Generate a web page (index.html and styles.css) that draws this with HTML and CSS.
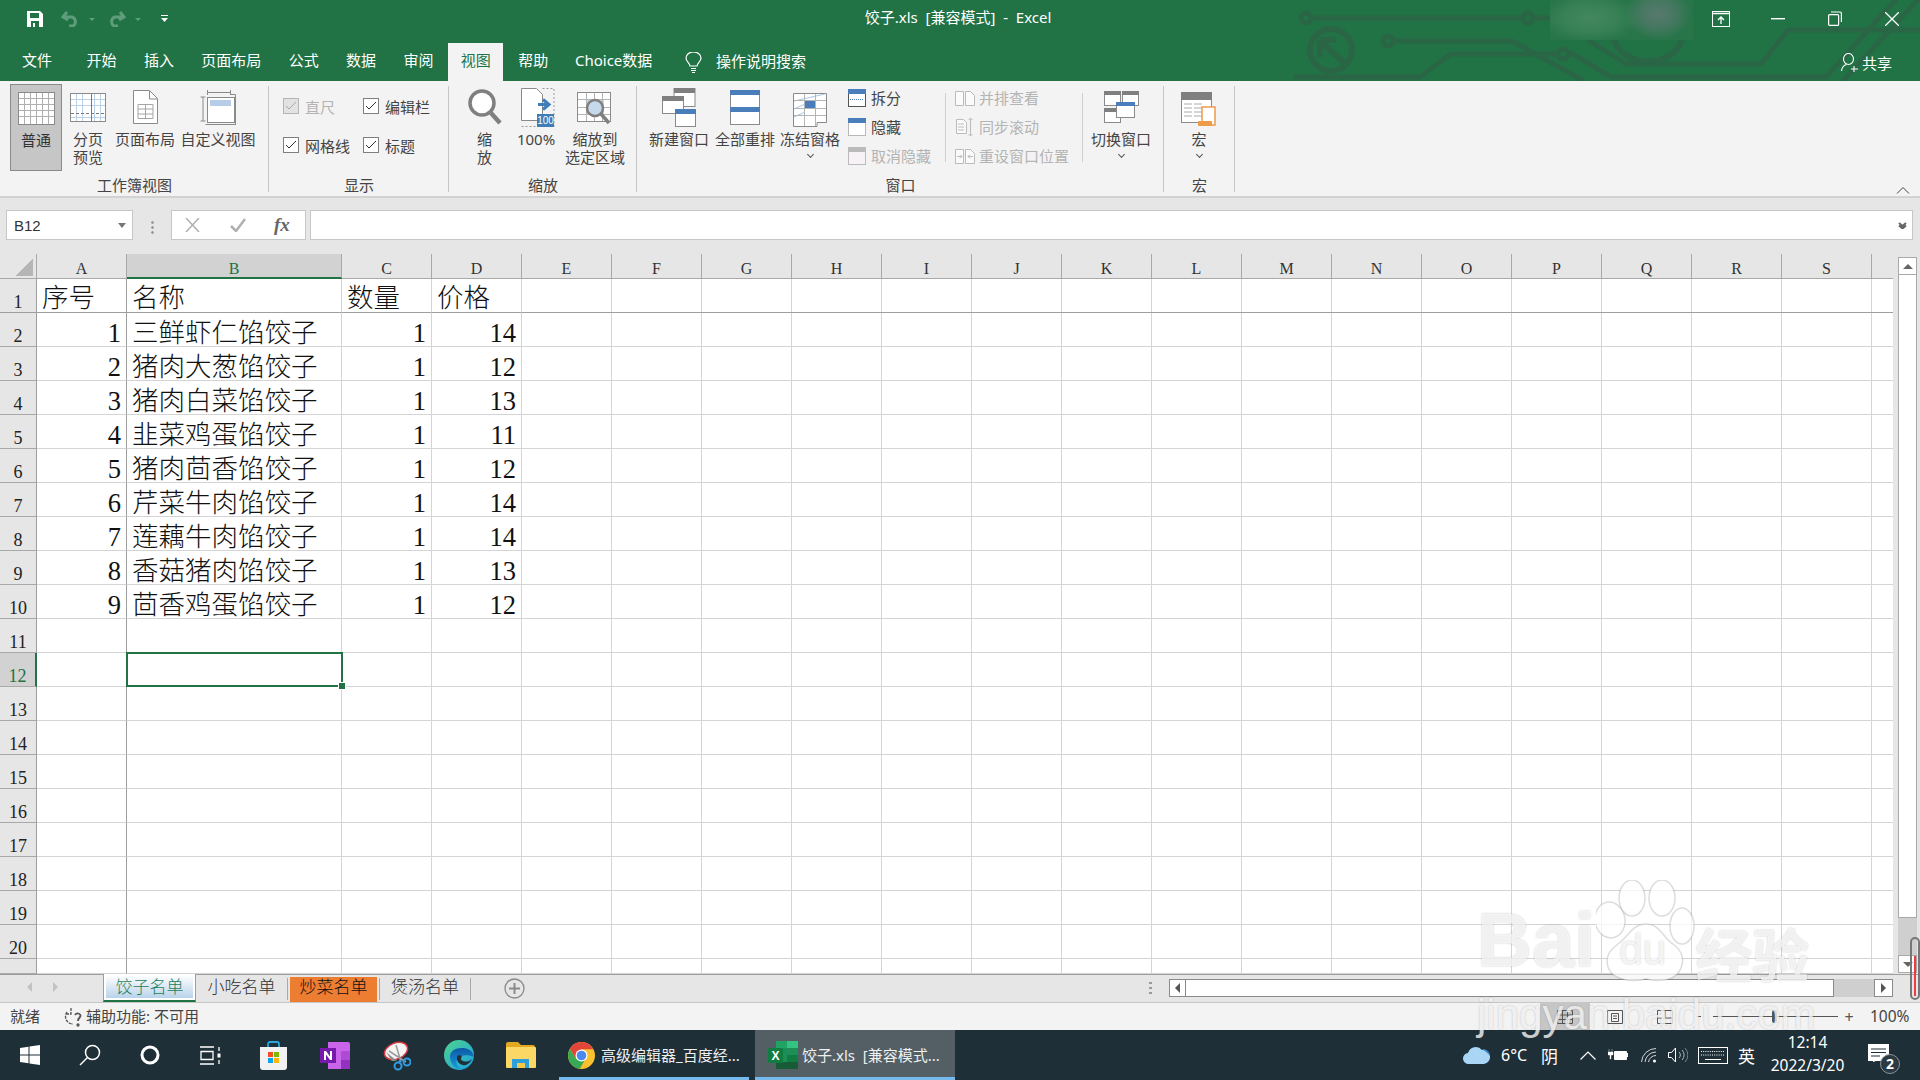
FILE: index.html
```html
<!DOCTYPE html>
<html lang="zh-CN">
<head>
<meta charset="utf-8">
<title>饺子.xls - Excel</title>
<link rel="stylesheet" href="styles.css">
</head>
<body>
<div class="app">
  <header class="top">
    <svg class="circuit" width="660" height="81" viewBox="0 0 660 81" fill="none" stroke="#2a6646" stroke-width="5">
      <circle cx="46" cy="18" r="5"/><path d="M51 18H263M273 18H290"/><circle cx="268" cy="18" r="5"/>
      <circle cx="71" cy="50" r="21" stroke-width="6"/><path d="M60 40h16M60 40v17M61 41l23 22" stroke-width="6"/>
      <circle cx="128" cy="41" r="5"/><path d="M133 41H252L324 81"/>
      <path d="M34 77H160L191 54H298"/><circle cx="303" cy="54" r="5"/><path d="M308 54H313L351 77H566L640 -5"/>
      <path d="M328 40L366 64H501L528 30H665"/><path d="M354 40a35 28 0 0 0 68 0" stroke-width="6"/><path d="M583 81L665 -8"/>
    </svg>
    <div class="blur-patch"></div>
    <div class="titlebar">
      <div class="qat">
        <svg class="qat-save" width="18" height="16" viewBox="0 0 18 16"><path d="M1 0h13l3 3v13H1z" fill="#fff"/><rect x="4" y="2" width="9" height="5" fill="#217346"/><rect x="5" y="10" width="8" height="6" fill="#217346"/><rect x="7" y="12" width="2" height="4" fill="#fff"/></svg>
        <svg class="qat-undo" width="19" height="16" viewBox="0 0 19 16" fill="none" stroke="#5f9c7c" stroke-width="3"><path d="M6 1L2 6l5 3M3 6h8a5 5 0 0 1 1 9H8"/></svg>
        <span class="qat-chev"></span>
        <svg class="qat-redo" width="19" height="16" viewBox="0 0 19 16" fill="none" stroke="#5f9c7c" stroke-width="3"><path d="M13 1l4 5-5 3M16 6H8a5 5 0 0 0-1 9h4"/></svg>
        <span class="qat-chev"></span>
        <svg class="qat-more" width="7" height="8" viewBox="0 0 7 8"><path d="M0 0h7v1H0zM0 3h7L3.5 7z" fill="#fff"/></svg>
      </div>
      <div class="doc-title">饺子.xls&nbsp; [兼容模式]&nbsp; -&nbsp; Excel</div>
      <div class="win-ctl">
        <span class="ctl"><svg width="18" height="16" viewBox="0 0 18 16" fill="none" stroke="#fff"><rect x=".5" y=".5" width="17" height="15"/><path d="M1 2.500h16M9 13V6M6 9l3-3 3 3" stroke-width="1.300"/></svg></span>
        <span class="ctl"><svg width="14" height="2" viewBox="0 0 14 2"><rect width="14" height="1.400" fill="#fff"/></svg></span>
        <span class="ctl"><svg width="14" height="15" viewBox="0 0 14 15" fill="none" stroke="#fff" stroke-width="1.200"><rect x=".6" y="3.600" width="10" height="10.800" rx="1"/><path d="M3 1h9a1.500 1.500 0 0 1 1.400 1.500V11"/></svg></span>
        <span class="ctl"><svg width="14" height="14" viewBox="0 0 14 14" stroke="#fff" stroke-width="1.300"><path d="M0 0l14 14M14 0L0 14"/></svg></span>
      </div>
    </div>
    <nav class="tabs">
      <span class="tab tab-file">文件</span>
      <span class="tab">开始</span><span class="tab">插入</span><span class="tab">页面布局</span><span class="tab">公式</span><span class="tab">数据</span><span class="tab">审阅</span>
      <span class="tab tab-active">视图</span>
      <span class="tab">帮助</span><span class="tab tab-choice">Choice数据</span>
      <svg class="bulb" width="17" height="21" viewBox="0 0 17 21" fill="none" stroke="#fff" stroke-width="1.200"><path d="M5 14c0-3-4-4-4-8a7.500 6 0 0 1 15 0c0 4-4 5-4 8z"/><path d="M6 16.500h5M6 18.500h5M7 20.500h3"/></svg>
      <span class="tell">操作说明搜索</span>
      <span class="share">
        <svg width="18" height="19" viewBox="0 0 18 19" fill="none" stroke="#fff" stroke-width="1.100"><ellipse cx="7.500" cy="6" rx="5" ry="5.500"/><path d="M.5 18c.5-4 3-6 5-6.500M13 13v6M10 16h7"/></svg>
        <span>共享</span>
      </span>
    </nav>
  </header>

  <section class="ribbon">
    <div class="group g-views">
      <div class="items">
        <div class="big b-normal">
          <div class="ic"><svg width="37" height="33" viewBox="0 0 37 33"><rect x=".5" y=".5" width="36" height="32" fill="#fff" stroke="#8a8a8a"/><path d="M6.500 1v31M12.500 1v31M18.500 1v31M24.500 1v31M30.500 1v31M1 6.500h35M1 12.500h35M1 18.500h35M1 24.500h35" stroke="#b0b0b0"/></svg></div>
          <span>普通</span>
        </div>
        <div class="big b-break">
          <div class="ic"><svg width="36" height="29" viewBox="0 0 36 29"><rect x=".5" y=".5" width="35" height="28" fill="#fff" stroke="#8a8a8a"/><path d="M6.500 1v27M12.500 1v27M24.500 1v27M30.500 1v27M1 6.500h34M1 12.500h34M1 24.500h34" stroke="#bcd2ea"/><path d="M21.500 1v27" stroke="#777"/><path d="M1 20.500h34" stroke="#777" stroke-dasharray="3 2"/></svg></div>
          <span>分页<br>预览</span>
        </div>
        <div class="big b-layout">
          <div class="ic"><svg width="25" height="34" viewBox="0 0 25 34"><path d="M.5.5h16l8 8v25H.5z" fill="#fff" stroke="#8a8a8a"/><path d="M16.500 1v8h8" fill="none" stroke="#8a8a8a"/><path d="M5 14.500h15v14H5zM5 19h15M5 24h15M12.500 15v13" fill="none" stroke="#a5a5a5"/></svg></div>
          <span>页面布局</span>
        </div>
        <div class="big b-custom">
          <div class="ic"><svg width="36" height="35" viewBox="0 0 36 35" fill="none" stroke="#8a8a8a"><path d="M7.500 0v5M30.500 0v5M7.500 2.500h23M.5 7h5M3 7v24M.5 31h5"/><path d="M30.500 4.500h5v31M5.500 34.500h30" /><rect x="7.500" y="7.500" width="27" height="25" fill="#fff"/><rect x="10" y="10" width="21" height="6" fill="#b7cce6" stroke="none"/></svg></div>
          <span>自定义视图</span>
        </div>
      </div>
      <div class="glabel">工作簿视图</div>
    </div>

    <div class="group g-show">
      <div class="items checks">
        <label class="chk off"><span class="box"><svg width="12" height="10" viewBox="0 0 12 10" fill="none" stroke="#a8a8a8"><path d="M1 5l3 3 7-7"/></svg></span>直尺</label>
        <label class="chk"><span class="box"><svg width="12" height="10" viewBox="0 0 12 10" fill="none" stroke="#333"><path d="M1 5l3 3 7-7"/></svg></span>编辑栏</label>
        <label class="chk"><span class="box"><svg width="12" height="10" viewBox="0 0 12 10" fill="none" stroke="#333"><path d="M1 5l3 3 7-7"/></svg></span>网格线</label>
        <label class="chk"><span class="box"><svg width="12" height="10" viewBox="0 0 12 10" fill="none" stroke="#333"><path d="M1 5l3 3 7-7"/></svg></span>标题</label>
      </div>
      <div class="glabel">显示</div>
    </div>

    <div class="group g-zoom">
      <div class="items">
        <div class="big b-mag">
          <div class="ic"><svg width="34" height="36" viewBox="0 0 34 36"><circle cx="14" cy="14" r="12" fill="#fff" stroke="#7f7f7f" stroke-width="3.500"/><path d="M23 24l9 10" stroke="#7f7f7f" stroke-width="4.500"/></svg></div>
          <span>缩<br>放</span>
        </div>
        <div class="big b-100">
          <div class="ic ic-100">
            <svg width="34" height="39" viewBox="0 0 34 39"><path d="M.5 38.500H33V.5H20" fill="none" stroke="#999" stroke-dasharray="2 2"/><path d="M.5.5h15l6 6v26H.5z" fill="#fff" stroke="#8a8a8a"/><path d="M17 16.500h9M22 11.500l6 5-6 5" fill="none" stroke="#3f7db8" stroke-width="3"/><rect x="16" y="26" width="17" height="13" fill="#3f7db8"/><text x="24.500" y="36" class="t100">100</text></svg>
          </div>
          <span>100%</span>
        </div>
        <div class="big b-sel">
          <div class="ic ic-low"><svg width="37" height="35" viewBox="0 0 37 35"><rect x=".5" y=".5" width="33" height="29" fill="#fff" stroke="#8a8a8a"/><rect x="9" y="7" width="18" height="15" fill="#c5d8ec"/><path d="M9.500 1v28M17.500 1v28M25.500 1v28M1 7.500h32M1 15.500h32M1 22.500h32" stroke="#b5b5b5"/><circle cx="18" cy="16" r="8" fill="#c5d8ec" stroke="#7f7f7f" stroke-width="2.500"/><path d="M24 22l8 9" stroke="#7f7f7f" stroke-width="3.500"/></svg></div>
          <span>缩放到<br>选定区域</span>
        </div>
      </div>
      <div class="glabel">缩放</div>
    </div>

    <div class="group g-window">
      <div class="items">
        <div class="big b-new">
          <div class="ic"><svg width="34" height="39" viewBox="0 0 34 39"><rect x="12" y=".5" width="21" height="18" fill="#fff" stroke="#8a8a8a"/><rect x="12" y="0" width="21" height="5" fill="#7f7f7f"/><rect x=".5" y="8.500" width="21" height="17" fill="#fff" stroke="#8a8a8a"/><rect x="0" y="8" width="22" height="5" fill="#7f7f7f"/><rect x="13.500" y="21.500" width="20" height="17" fill="#fff" stroke="#8a8a8a"/><rect x="13" y="21" width="21" height="5" fill="#4a7ebb"/></svg></div>
          <span>新建窗口</span>
        </div>
        <div class="big b-new b-gap6">
          <div class="ic"><svg width="30" height="35" viewBox="0 0 30 35"><rect x=".5" y=".5" width="29" height="34" fill="#fff" stroke="#8a8a8a"/><rect width="30" height="5" fill="#4a7ebb"/><rect y="17" width="30" height="5" fill="#4a7ebb"/></svg></div>
          <span>全部重排</span>
        </div>
        <div class="big b-new b-gap5">
          <div class="ic ic-low"><svg width="34" height="34" viewBox="0 0 34 34"><path d="M.5.5h33v29H24v4H.5z" fill="#fff" stroke="#8a8a8a"/><path d="M1 8l31-7M1 16l11-5M1 24l11-5" stroke="#a9c6e4"/><path d="M11.500 1v32M22.500 1v32M1 7.500h32M1 15.500h32M1 22.500h32" stroke="#b5b5b5"/><rect x="12" y="8" width="10" height="7" fill="#4a7ebb"/></svg></div>
          <span>冻结窗格</span>
          <i class="chev"></i>
        </div>
        <div class="smalls s-a">
          <div class="small"><svg width="18" height="18" viewBox="0 0 18 18" fill="#fff" stroke="#555"><rect x=".5" y=".5" width="17" height="17"/><rect width="18" height="5" fill="#4a7ebb" stroke="none"/><path d="M2 10.500h14" stroke="#4a7ebb" stroke-dasharray="1 1"/></svg><span>拆分</span></div>
          <div class="small"><svg width="18" height="18" viewBox="0 0 18 18" fill="#fff" stroke="#777" stroke-dasharray="1 1"><rect x=".5" y=".5" width="17" height="17"/><rect width="18" height="5" fill="#4a7ebb" stroke="none"/></svg><span>隐藏</span></div>
          <div class="small off"><svg width="18" height="18" viewBox="0 0 18 18" fill="#f6f2f6" stroke="#bbb"><rect x=".5" y=".5" width="17" height="17"/><rect width="18" height="5" fill="#bbb" stroke="none"/></svg><span>取消隐藏</span></div>
        </div>
        <i class="vsep"></i>
        <div class="smalls s-b">
          <div class="small off"><svg width="20" height="18" viewBox="0 0 20 18" fill="#fbfbfb" stroke="#bbb"><path d="M.5 2.500h8v14h-8zM10.500 2.500h5l4 4v10h-9z"/></svg><span>并排查看</span></div>
          <div class="small off"><svg width="20" height="20" viewBox="0 0 20 20" fill="#fbfbfb" stroke="#bbb"><path d="M1.500 2.500h7l3 3v11h-10zM3 7h6M3 10h6M3 13h6M15.500 1v18M13.500 3l2-2 2 2M13.500 17l2 2 2-2"/></svg><span>同步滚动</span></div>
          <div class="small off"><svg width="20" height="18" viewBox="0 0 20 18" fill="#fbfbfb" stroke="#bbb"><path d="M.5 2.500h8v14h-8zM10.500 2.500h5l4 4v10h-9zM2 9.500h5M5 7.500l2 2-2 2M18 9.500h-5M15 7.500l-2 2 2 2"/></svg><span>重设窗口位置</span></div>
        </div>
        <i class="vsep"></i>
        <div class="big b-switch">
          <div class="ic"><svg width="35" height="32" viewBox="0 0 35 32"><rect x=".5" y=".5" width="16" height="14" fill="#fff" stroke="#8a8a8a"/><rect width="17" height="4" fill="#7f7f7f"/><rect x="18.500" y=".5" width="16" height="14" fill="#fff" stroke="#8a8a8a"/><rect x="18" width="17" height="4" fill="#7f7f7f"/><rect x=".5" y="17.500" width="16" height="14" fill="#fff" stroke="#8a8a8a"/><rect y="17" width="17" height="4" fill="#7f7f7f"/><rect x="12.500" y="11.500" width="18" height="15" fill="#fff" stroke="#8a8a8a"/><rect x="12" y="11" width="19" height="4" fill="#4a7ebb"/></svg></div>
          <span>切换窗口</span>
          <i class="chev"></i>
        </div>
      </div>
      <div class="glabel">窗口</div>
    </div>

    <div class="group g-macro">
      <div class="items">
        <div class="big b-macro">
          <div class="ic ic-low"><svg width="36" height="35" viewBox="0 0 36 35"><rect x=".5" y=".5" width="30" height="30" fill="#fff" stroke="#8a8a8a"/><rect width="31" height="8" fill="#7f7f7f"/><path d="M3 12h8M13 12h8M3 16h8M13 16h8M3 20h8M13 20h8M3 24h8M13 24h8" stroke="#aaa"/><path d="M21 15h13v18H21z" fill="#fff" stroke="#ed9a4a" stroke-width="1.500"/><rect x="17" y="29" width="14" height="5" rx="1" fill="#ed9a4a"/></svg></div>
          <span>宏</span>
          <i class="chev"></i>
        </div>
      </div>
      <div class="glabel">宏</div>
    </div>
    <svg class="collapse" width="14" height="8" viewBox="0 0 14 8" fill="none" stroke="#444"><path d="M1 7.500l6-6 6 6"/></svg>
  </section>

  <section class="fbar">
    <div class="namebox"><span>B12</span><i class="tri"></i></div>
    <div class="dots"></div>
    <div class="fnbox">
      <svg width="15" height="14" viewBox="0 0 15 14" stroke="#b0b0b0" stroke-width="1.500"><path d="M1 0l13 14M14 0L1 14"/></svg>
      <svg width="16" height="14" viewBox="0 0 16 14" fill="none" stroke="#b0b0b0" stroke-width="2.500"><path d="M1 8l5 5 9-12"/></svg>
      <span class="fx">fx</span>
    </div>
    <div class="finput"><svg width="9" height="7" viewBox="0 0 9 7" fill="none" stroke="#666" stroke-width="2"><path d="M1 1l3.500 3L8 1M1 3.500l3.500 3 3.500-3"/></svg></div>
  </section>

  <main class="sheetwrap">
    <div class="sheet">
      <div class="row headrow">
        <div class="corner"><i></i></div><div class="ch">A</div><div class="ch ch-sel">B</div><div class="ch">C</div><div class="ch">D</div>
        <div class="ch-rest"><span>E</span><span>F</span><span>G</span><span>H</span><span>I</span><span>J</span><span>K</span><span>L</span><span>M</span><span>N</span><span>O</span><span>P</span><span>Q</span><span>R</span><span>S</span></div>
      </div>
      <div class="row r-first"><div class="rh">1</div><div class="c">序号</div><div class="c">名称</div><div class="c">数量</div><div class="c">价格</div><div class="rest"></div></div>
      <div class="row"><div class="rh">2</div><div class="c n">1</div><div class="c">三鲜虾仁馅饺子</div><div class="c n">1</div><div class="c n">14</div><div class="rest"></div></div>
      <div class="row"><div class="rh">3</div><div class="c n">2</div><div class="c">猪肉大葱馅饺子</div><div class="c n">1</div><div class="c n">12</div><div class="rest"></div></div>
      <div class="row"><div class="rh">4</div><div class="c n">3</div><div class="c">猪肉白菜馅饺子</div><div class="c n">1</div><div class="c n">13</div><div class="rest"></div></div>
      <div class="row"><div class="rh">5</div><div class="c n">4</div><div class="c">韭菜鸡蛋馅饺子</div><div class="c n">1</div><div class="c n">11</div><div class="rest"></div></div>
      <div class="row"><div class="rh">6</div><div class="c n">5</div><div class="c">猪肉茴香馅饺子</div><div class="c n">1</div><div class="c n">12</div><div class="rest"></div></div>
      <div class="row"><div class="rh">7</div><div class="c n">6</div><div class="c">芹菜牛肉馅饺子</div><div class="c n">1</div><div class="c n">14</div><div class="rest"></div></div>
      <div class="row"><div class="rh">8</div><div class="c n">7</div><div class="c">莲藕牛肉馅饺子</div><div class="c n">1</div><div class="c n">14</div><div class="rest"></div></div>
      <div class="row"><div class="rh">9</div><div class="c n">8</div><div class="c">香菇猪肉馅饺子</div><div class="c n">1</div><div class="c n">13</div><div class="rest"></div></div>
      <div class="row"><div class="rh">10</div><div class="c n">9</div><div class="c">茴香鸡蛋馅饺子</div><div class="c n">1</div><div class="c n">12</div><div class="rest"></div></div>
      <div class="row"><div class="rh">11</div><div class="c"></div><div class="c"></div><div class="c"></div><div class="c"></div><div class="rest"></div></div>
      <div class="row"><div class="rh rh-sel">12</div><div class="c"></div><div class="c c-sel"></div><div class="c"></div><div class="c"></div><div class="rest"></div></div>
      <div class="row"><div class="rh">13</div><div class="c"></div><div class="c"></div><div class="c"></div><div class="c"></div><div class="rest"></div></div>
      <div class="row"><div class="rh">14</div><div class="c"></div><div class="c"></div><div class="c"></div><div class="c"></div><div class="rest"></div></div>
      <div class="row"><div class="rh">15</div><div class="c"></div><div class="c"></div><div class="c"></div><div class="c"></div><div class="rest"></div></div>
      <div class="row"><div class="rh">16</div><div class="c"></div><div class="c"></div><div class="c"></div><div class="c"></div><div class="rest"></div></div>
      <div class="row"><div class="rh">17</div><div class="c"></div><div class="c"></div><div class="c"></div><div class="c"></div><div class="rest"></div></div>
      <div class="row"><div class="rh">18</div><div class="c"></div><div class="c"></div><div class="c"></div><div class="c"></div><div class="rest"></div></div>
      <div class="row"><div class="rh">19</div><div class="c"></div><div class="c"></div><div class="c"></div><div class="c"></div><div class="rest"></div></div>
      <div class="row"><div class="rh">20</div><div class="c"></div><div class="c"></div><div class="c"></div><div class="c"></div><div class="rest"></div></div>
      <div class="row r-last"><div class="rh"></div><div class="c"></div><div class="c"></div><div class="c"></div><div class="c"></div><div class="rest"></div></div>
    </div>
    <aside class="vscroll">
      <div class="sb-btn"><i class="up"></i></div>
      <div class="sb-thumb"></div>
      <div class="sb-track"></div>
      <div class="sb-btn"><i class="down"></i></div>
    </aside>
  </main>

  <section class="tabbar">
    <div class="navzone"><i class="nav-l"></i><i class="nav-r"></i></div>
    <div class="stab stab-active"><span>饺子名单</span></div>
    <div class="stab stab-2">小吃名单</div>
    <div class="stab stab-3">炒菜名单</div>
    <div class="stab stab-4">煲汤名单</div>
    <svg class="addsheet" width="21" height="21" viewBox="0 0 21 21" fill="none" stroke="#8a8a8a" stroke-width="1.300"><circle cx="10.500" cy="10.500" r="9.500"/><path d="M10.500 5v11M5 10.500h11" stroke-width="2"/></svg>
    <div class="tb-dots"></div>
    <div class="hscroll">
      <div class="hs-btn"><i class="hs-l"></i></div>
      <div class="hs-thumb"></div>
      <div class="hs-track"></div>
      <div class="hs-btn"><i class="hs-r"></i></div>
    </div>
  </section>

  <footer class="status">
    <span class="st-ready">就绪</span>
    <svg class="st-ic" width="19" height="20" viewBox="0 0 19 20" fill="none" stroke="#555" stroke-width="1.300"><path d="M3 5a7.500 7.500 0 0 0 6 12M7 1v6H2" stroke-dasharray="3 1"/><path d="M11 8c2-3 7-1 5 2-1 1-2 2-2 4" stroke-width="1.800"/><circle cx="14" cy="18" r="1" fill="#555"/></svg>
    <span class="st-acc">辅助功能: 不可用</span>
    <div class="st-right">
      <span class="view view-on"><svg width="16" height="14" viewBox="0 0 16 14" fill="none" stroke="#555"><path d="M.5.5h15v13H.5zM.5 5h15M.5 9.500h15M5.500 1v12M10.500 1v12"/></svg></span>
      <span class="view"><svg width="16" height="14" viewBox="0 0 16 14" fill="none" stroke="#555"><path d="M.5.5h15v13H.5zM4.500 3.500h7v8h-7zM6 6h4M6 8.500h4"/></svg></span>
      <span class="view"><svg width="16" height="14" viewBox="0 0 16 14" fill="none" stroke="#555"><path d="M.5.5h15v13H.5zM8 1v6M1 8h14" /></svg></span>
      <div class="zoomer"><i class="z-thumb"></i></div>
      <span class="z-plus">+</span>
      <span class="z-pct">100%</span>
    </div>
  </footer>

  <div class="taskbar">
    <span class="tb w60"><svg width="20" height="20" viewBox="0 0 20 20" fill="#fff"><path d="M0 3l8.500-1.300v7.700H0zM9.500 1.500L20 0v9.400H9.500zM0 10.500h8.500v7.800L0 17zM9.500 10.500H20V20L9.500 18.500z"/></svg></span>
    <span class="tb w60"><svg width="22" height="22" viewBox="0 0 22 22" fill="none" stroke="#fff" stroke-width="1.500"><circle cx="13.500" cy="8.500" r="7"/><path d="M8.500 13.500L1 21"/></svg></span>
    <span class="tb w60"><svg width="20" height="20" viewBox="0 0 20 20" fill="none" stroke="#fff" stroke-width="3"><circle cx="10" cy="10" r="8"/></svg></span>
    <span class="tb w60"><svg width="21" height="19" viewBox="0 0 21 19" fill="none" stroke="#fff" stroke-width="1.300"><path d="M0 1h14M0 18h14M1 5.500h12v8H1zM19 1v4M19 14v4"/><rect x="17.500" y="7.500" width="3" height="4" fill="#fff" stroke="none"/></svg></span>
    <span class="tb w62 first"><svg width="29" height="29" viewBox="0 0 29 29"><path d="M9 6V3a2 2 0 0 1 2-2h7a2 2 0 0 1 2 2v3" fill="none" stroke="#29a8e0" stroke-width="1.800"/><path d="M1 6h27v20a3 3 0 0 1-3 3H4a3 3 0 0 1-3-3z" fill="#f2f2f2"/><rect x="9" y="11" width="5" height="5" fill="#f25022"/><rect x="15" y="11" width="5" height="5" fill="#7fba00"/><rect x="9" y="17" width="5" height="5" fill="#00a4ef"/><rect x="15" y="17" width="5" height="5" fill="#ffb900"/></svg></span>
    <span class="tb w62"><svg width="30" height="27" viewBox="0 0 30 27"><path d="M8 0h20a2 2 0 0 1 2 2v23a2 2 0 0 1-2 2H8z" fill="#ca64ea"/><rect x="21" y="9" width="9" height="9" fill="#ae4bd5"/><rect x="21" y="18" width="9" height="9" fill="#9332bf"/><path d="M0 6h16v15H0z" fill="#7719aa"/><path d="M4 18V9h2l4 5.500V9h2v9h-2l-4-5.500V18z" fill="#fff"/></svg></span>
    <span class="tb w62"><svg width="28" height="31" viewBox="0 0 28 31"><ellipse cx="13" cy="11" rx="12" ry="8" fill="#f4f4f4" stroke="#d9363e" stroke-width="1.500" transform="rotate(-22 13 11)"/><path d="M13 5l5 17M6 11l17 11" stroke="#9a9a9a" stroke-width="1.500"/><path d="M3 12l11 9-5 0z" fill="#8a8a8a"/><circle cx="15" cy="26" r="3.500" fill="none" stroke="#2f9be0" stroke-width="2"/><circle cx="24" cy="22" r="3.500" fill="none" stroke="#2f9be0" stroke-width="2"/><path d="M17 20l-1 3M20 20l2 1" stroke="#2f9be0" stroke-width="2"/></svg></span>
    <span class="tb w62"><svg width="31" height="30" viewBox="0 0 31 30"><defs><linearGradient id="eg1" x1="0" y1="0" x2="1" y2="1"><stop offset="0" stop-color="#4fd68c"/><stop offset="1" stop-color="#1b9de2"/></linearGradient><linearGradient id="eg2" x1="0" y1="0" x2="0" y2="1"><stop offset="0" stop-color="#0c59a4"/><stop offset="1" stop-color="#1b9de2"/></linearGradient></defs><circle cx="15" cy="15" r="15" fill="url(#eg1)"/><path d="M30 17c-1-7-7-9-12-9-7 0-12 3-12 9 0 7 6 13 13 13-7-3-8-9-5-12 3-3 10-4 16-1z" fill="url(#eg2)"/><path d="M13 17c-1 5 4 9 9 8 2-1 5-3 6-6-3 3-7 3-9 2-3-1-2-3-1-5-2-1-5-1-5 1z" fill="#1f2f38"/></svg></span>
    <span class="tb w62"><svg width="30" height="26" viewBox="0 0 30 26"><path d="M0 2a2 2 0 0 1 2-2h10l3 3h12a2 2 0 0 1 2 2v19H0z" fill="#e2a81f"/><rect y="5" width="30" height="21" rx="1" fill="#fbd765"/><path d="M6 17h17v9H6z" fill="#2d9fdb"/><rect x="11" y="21" width="8" height="5" fill="#f2c94c"/></svg></span>
    <div class="task t-chrome">
      <svg width="27" height="27" viewBox="0 0 27 27"><circle cx="13.500" cy="13.500" r="13.500" fill="#fbc02d"/><path d="M13.500 0A13.500 13.500 0 0 0 1.800 6.800l6 10.300 5.700-9.800h11.700A13.500 13.500 0 0 0 13.500 0z" fill="#e2453a"/><path d="M1.800 6.800a13.500 13.500 0 0 0 10 20l5.800-10-9.800.3z" fill="#37a853"/><circle cx="13.500" cy="13.500" r="6" fill="#fff"/><circle cx="13.500" cy="13.500" r="4.800" fill="#4b88f0"/></svg>
      <span>高级编辑器_百度经...</span>
    </div>
    <div class="task t-excel">
      <svg width="30" height="28" viewBox="0 0 30 28"><rect x="8" width="22" height="28" rx="1.500" fill="#1d8f56"/><rect x="19" width="11" height="7" fill="#33c481"/><rect x="8" width="11" height="7" fill="#21a366"/><rect x="19" y="14" width="11" height="7" fill="#107c41"/><rect x="8" y="21" width="22" height="7" fill="#185c37"/><rect y="7" width="15" height="15" rx="1" fill="#107c41"/><text x="7.500" y="19" class="tx">X</text></svg>
      <span>饺子.xls&nbsp; [兼容模式...</span>
    </div>
    <div class="tray">
      <svg class="t-cloud" width="27" height="19" viewBox="0 0 27 19"><path d="M6 18a5.500 5.500 0 0 1-1-11 8 8 0 0 1 14-3 6.500 6.500 0 0 1 2 14z" fill="#a9d6f5"/><path d="M19 3a7 7 0 0 1 8 7c-2-3-5-5-8-7z" fill="#3a84c8"/></svg>
      <span class="t-temp">6°C</span>
      <span class="t-wx">阴</span>
      <svg class="t-up" width="16" height="9" viewBox="0 0 16 9" fill="none" stroke="#fff" stroke-width="1.200"><path d="M.5 8.500L8 1l7.500 7.500"/></svg>
      <svg class="t-bat" width="20" height="12" viewBox="0 0 20 12"><path d="M6.500 2.500h12v8h-12z" fill="#fff" stroke="#fff"/><rect x="19" y="4" width="1" height="4" fill="#fff"/><path d="M1 0v3M4 0v3M0 3h5v3H3v4H2V6H0z" fill="#fff" stroke="#fff" stroke-width=".4"/></svg>
      <svg class="t-wifi" width="16" height="16" viewBox="0 0 16 16" fill="none" stroke="#cfd4d6"><path d="M.5 15A14.500 14.500 0 0 1 15 1.500M4 15A11 11 0 0 1 15 5M7.500 15A7.500 7.500 0 0 1 15 8.500"/><circle cx="13.500" cy="14" r="1.500" fill="#fff" stroke="none"/></svg>
      <svg class="t-vol" width="20" height="16" viewBox="0 0 20 16" fill="none" stroke="#fff"><path d="M.5 5.500h3l4-4.500v14l-4-4.500h-3z"/><path d="M11 5a4 4 0 0 1 0 6M14 3a7 7 0 0 1 0 10" stroke="#aeb6ba"/><path d="M17 1a10 10 0 0 1 0 14" stroke="#778288"/></svg>
      <svg class="t-kbd" width="30" height="17" viewBox="0 0 30 17" fill="none" stroke="#fff"><rect x=".5" y=".5" width="29" height="16"/><path d="M3 4.500h24M3 8h24" stroke-dasharray="1 1.200"/><path d="M7 12.500h16"/></svg>
      <span class="t-ime">英</span>
      <div class="t-clock"><span>12:14</span><span>2022/3/20</span></div>
      <div class="t-notif">
        <svg width="21" height="18" viewBox="0 0 21 18"><path d="M0 0h21v17H8l-3 1v-1H0z" fill="#fff"/><path d="M3 5h15M3 8.500h15M3 12h9" stroke="#1f2f38"/></svg>
        <b>2</b>
      </div>
    </div>
    <i class="task-line l-chrome"></i><i class="task-line l-excel"></i>
  </div>

  <div class="redmark"><i></i></div>

  <div class="wm">
    <div class="wm-top">
      <span class="wm-bai">Bai</span>
      <div class="wm-paw">
        <svg width="100" height="104" viewBox="0 0 100 104" fill="rgba(255,255,255,.75)" stroke="rgba(120,120,120,.25)" stroke-width="1.500"><ellipse cx="14" cy="40" rx="15" ry="18" transform="rotate(-10 14 40)"/><ellipse cx="36" cy="18" rx="13" ry="18"/><ellipse cx="66" cy="18" rx="13" ry="18"/><ellipse cx="86" cy="46" rx="12" ry="18"/><path d="M50 44c14 0 17 14 27 20 8 6 12 14 8 24-4 11-18 15-35 11-17 4-34 0-38-12-3-11 2-17 10-23 10-7 14-20 28-20z"/></svg>
        <span class="wm-du">du</span>
      </div>
      <span class="wm-cn">经验</span>
    </div>
    <div class="wm-url">jingyan.baidu.com</div>
  </div>
</div>
</body>
</html>
```

FILE: styles.css
```css
* { box-sizing: border-box; }
html, body { margin: 0; padding: 0; width: 1920px; height: 1080px; overflow: hidden; }
body { font-family: "Noto Sans", "Noto Sans CJK SC", sans-serif; font-size: 15px; color: #444; background: #f3f3f3; }
i { display: block; font-style: normal; }
.app { position: relative; width: 1920px; height: 1080px; display: flex; flex-direction: column; overflow: hidden; }

/* Title area */
.top { position: relative; height: 81px; background: #217346; color: #fff; flex: none; }
.circuit { position: absolute; left: 1260px; top: 0; }
.blur-patch { position: absolute; left: 1550px; top: 0; width: 143px; height: 40px; background: radial-gradient(ellipse 50px 26px at 40px 18px, #43885f 0, rgba(67,136,95,.6) 55%, rgba(33,115,70,0) 100%), radial-gradient(ellipse 34px 26px at 108px 14px, #58796f 0, rgba(88,121,111,.6) 55%, rgba(33,115,70,0) 100%), #277549; }
.titlebar { position: relative; height: 43px; display: grid; grid-template-columns: 1fr auto 1fr; align-items: start; }
.qat { display: flex; align-items: center; padding-left: 26px; height: 38px; }
.qat-undo { margin-left: 17px; }
.qat-chev { width: 0; height: 0; margin-left: 9px; border: 3px solid transparent; border-top-color: #5f9c7c; border-bottom: 0; }
.qat-redo { margin-left: 12px; }
.qat-more { margin-left: 20px; }
.doc-title { font-size: 15px; line-height: 36px; height: 36px; padding-right: 4px; margin-top: -1px; white-space: nowrap; }
.win-ctl { display: flex; justify-content: flex-end; height: 37px; }
.ctl { width: 57px; display: flex; align-items: center; justify-content: center; }
.tabs { position: relative; height: 38px; display: flex; align-items: center; }
.tab { height: 38px; padding: 0 13.7px; line-height: 35px; white-space: nowrap; }
.tab-file { padding-left: 22px; padding-right: 20.8px; }
.tab-active { background: #f3f3f3; color: #217346; padding: 0 12.5px; margin: 0 1.2px; }
.tab-choice { padding-left: 13px; }
.bulb { margin-left: 19px; }
.tell { margin-left: 14px; margin-top: -3px; }
.share { margin-left: auto; display: flex; align-items: center; gap: 3px; margin-right: 28px; }

/* Ribbon */
.ribbon { position: relative; height: 117px; display: flex; flex: none; padding-top: 3px; background: #f3f3f3; border-bottom: 2px solid #d2d2d2; }
.group { position: relative; height: 111px; display: flex; flex-direction: column; }
.group::after { content: ""; position: absolute; right: 0; top: 2px; bottom: 3px; width: 1px; background: #c6c6c6; }
.items { display: flex; height: 91px; }
.glabel { text-align: center; line-height: 20px; height: 20px; color: #444; }
.g-views { width: 269px; }
.g-show { width: 180px; }
.g-zoom { width: 188px; }
.g-window { width: 527px; }
.g-macro { width: 71px; }
.g-views .items { padding-left: 10px; }
.g-zoom .items { padding-left: 17px; }
.g-window .items { padding-left: 12px; }
.g-macro .items { padding-left: 17px; }
.big { display: flex; flex-direction: column; align-items: center; text-align: center; line-height: 18px; white-space: nowrap; }
.ic { height: 46px; display: flex; align-items: center; justify-content: center; }
.ic-low { padding-top: 5px; }
.ic-100 { padding-left: 3px; }
.b-normal { width: 52px; height: 87px; background: #c6c6c6; border: 1px solid #8a8a8a; color: #333; }
.b-break { width: 36px; margin-left: 8px; }
.b-layout { width: 64px; margin-left: 7px; }
.b-custom { width: 78px; margin-left: 2px; }
.b-mag { width: 37px; }
.b-100 { width: 40px; margin-left: 13px; }
.b-sel { width: 62px; margin-left: 8px; }
.t100 { font: 10px "Liberation Sans", sans-serif; fill: #fff; text-anchor: middle; }
.b-new { width: 60px; }
.b-gap6 { margin-left: 6px; }
.b-gap5 { margin-left: 5px; }
.chev { width: 5px; height: 5px; margin-top: 4px; border-right: 1px solid #555; border-bottom: 1px solid #555; transform: rotate(45deg); }
.smalls { display: flex; flex-direction: column; margin-top: -1px; }
.s-a { width: 97px; margin-left: 8px; }
.s-b { width: 127px; margin-left: 9px; }
.small { height: 29px; display: flex; align-items: center; gap: 5px; white-space: nowrap; line-height: 18px; }
.s-b .small { gap: 4px; }
.small.off { color: #b4b4b4; }
.vsep { width: 1px; height: 69px; margin-top: 9px; background: #d0d0d0; }
.b-switch { width: 60px; margin-left: 8px; }
.b-macro { width: 36px; }
.checks { display: grid; grid-template-columns: 80px 90px; grid-auto-rows: 39px; padding: 14px 0 0 14px; height: 91px; }
.chk { display: flex; align-items: flex-start; gap: 6px; line-height: 18px; white-space: nowrap; }
.box { width: 16px; height: 16px; border: 1px solid #7f7f7f; background: #fff; display: flex; align-items: center; justify-content: center; flex: none; }
.chk.off { color: #b4b4b4; }
.chk.off .box { background: #e2e2e2; border-color: #b5b5b5; }
.collapse { position: absolute; right: 10px; top: 105px; }

/* Formula bar */
.fbar { height: 56px; flex: none; display: flex; padding: 12px 7px 14px 6px; background: #e6e6e6; }
.namebox { width: 127px; height: 30px; background: #fff; border: 1px solid #c6c6c6; display: flex; align-items: center; justify-content: space-between; padding: 0 6px 0 7px; font-family: "Liberation Sans", sans-serif; font-size: 15px; color: #333; }
.tri { width: 0; height: 0; border: 4px solid transparent; border-top: 5px solid #777; border-bottom: 0; }
.dots { width: 38px; background: radial-gradient(circle, #9a9a9a 1.2px, transparent 1.5px) center 10px / 3px 5px no-repeat, radial-gradient(circle, #9a9a9a 1.2px, transparent 1.5px) center 15px / 3px 5px no-repeat, radial-gradient(circle, #9a9a9a 1.2px, transparent 1.5px) center 20px / 3px 5px no-repeat; }
.fnbox { width: 135px; height: 30px; background: #fff; border: 1px solid #c6c6c6; display: flex; align-items: center; padding-left: 13px; }
.fnbox svg + svg { margin-left: 30px; }
.fx { font: italic 700 19px "Liberation Serif", serif; color: #666; margin-left: 28px; }
.finput { flex: 1; height: 30px; margin-left: 4px; background: #fff; border: 1px solid #c6c6c6; display: flex; align-items: center; justify-content: flex-end; padding-right: 5px; }

/* Sheet */
.sheetwrap { height: 720px; flex: none; display: flex; overflow: hidden; background: #fff; }
.sheet { width: 1893px; flex: none; overflow: hidden; }
.row { display: grid; grid-template-columns: 37px 90px 215px 90px 90px 1fr; height: 34px; }
.headrow { height: 25px; background: #e6e6e6; }
.corner { border-right: 1px solid #a9a9a9; border-bottom: 1px solid #a9a9a9; padding: 4px 3px 0 0; }
.corner i { width: 18px; height: 18px; margin-left: auto; background: linear-gradient(135deg, transparent 50%, #b5b5b5 50%); }
.ch { border-right: 1px solid #a9a9a9; border-bottom: 1px solid #a9a9a9; text-align: center; font: 16px/30px "Liberation Serif", "Noto Sans CJK SC", serif; color: #333; overflow: hidden; }
.ch-sel { background: #d2d2d2; color: #217346; border-bottom: 2px solid #217346; }
.ch-rest { display: flex; border-bottom: 1px solid #a9a9a9; }
.ch-rest span { flex: none; width: 90px; border-right: 1px solid #a9a9a9; text-align: center; font: 16px/30px "Liberation Serif", serif; color: #333; height: 24px; overflow: hidden; }
.rh { background: #e6e6e6; border-right: 1px solid #9e9e9e; border-bottom: 1px solid #a9a9a9; text-align: center; font: 18px/40px "Liberation Serif", serif; color: #222; overflow: hidden; padding-top: 3px; }
.rh-sel { background: #d2d2d2; color: #217346; border-right: 2px solid #217346; }
.c { border-right: 1px solid #d4d4d4; border-bottom: 1px solid #d4d4d4; padding: 0 3px 0 5px; font: 300 26.5px/40px "Liberation Serif", "Noto Sans CJK SC", serif; color: #111; white-space: nowrap; overflow: hidden; }
.row > .c:nth-child(2) { border-right: 1px solid #9e9e9e; }
.c.n { text-align: right; padding-right: 5px; font-weight: 400; }
.rest { background: repeating-linear-gradient(to right, transparent 0 89px, #d4d4d4 89px 90px); border-bottom: 1px solid #d4d4d4; }
.r-first > * { border-bottom-color: #9e9e9e; }
.r-first > .c { line-height: 38px; }
.r-last { height: 15px; }
.c-sel { position: relative; overflow: visible; border: 0; box-shadow: inset 0 0 0 2px #217346; margin: -1px -1px 0 -1px; z-index: 1; }
.c-sel::after { content: ""; position: absolute; right: -3px; bottom: -3px; width: 6px; height: 6px; background: #217346; border: 1px solid #fff; }

.vscroll { flex: 1; background: #e6e6e6; display: flex; flex-direction: column; padding: 3px 3px 1px 5px; }
.sb-btn { height: 18px; background: #fff; border: 1px solid #a9a9a9; display: flex; align-items: center; justify-content: center; flex: none; }
.up { width: 0; height: 0; border: 5px solid transparent; border-bottom: 5px solid #666; border-top: 0; }
.down { width: 0; height: 0; border: 5px solid transparent; border-top: 5px solid #666; border-bottom: 0; }
.sb-thumb { height: 643px; background: #fff; border: 1px solid #a9a9a9; border-top: 0; flex: none; }
.sb-track { flex: 1; background: #cfcfcf; }

/* Sheet tabs */
.tabbar { height: 29px; flex: none; display: flex; background: #e6e6e6; border-top: 1px solid #9e9e9e; border-bottom: 1px solid #c6c6c6; position: relative; }
.navzone { width: 103px; display: flex; gap: 21px; align-items: center; padding: 0 0 4px 27px; }
.nav-l { width: 0; height: 0; border: 5px solid transparent; border-right: 5px solid #c2c2c2; border-left: 0; }
.nav-r { width: 0; height: 0; border: 5px solid transparent; border-left: 5px solid #c2c2c2; border-right: 0; }
.stab { height: 27px; font-size: 17px; line-height: 24px; text-align: center; font-weight: 300; color: #333; white-space: nowrap; }
.stab-active { width: 93px; margin-top: -1px; height: 28px; background: #fff; border: 1px solid #9e9e9e; border-top: 0; border-bottom: 2px solid #217346; padding: 1px 2px 0; color: #1c7d5a; }
.stab-active span { display: block; height: 23px; background: linear-gradient(#fff, #b9d3ea); line-height: 23px; }
.stab-2 { width: 92px; border-right: 1px solid #a9a9a9; height: 22px; margin-top: 3px; line-height: 18px; }
.stab-3 { width: 87px; margin-left: 2px; background: #ed7d31; color: #111; height: 25px; margin-top: 2px; line-height: 20px; }
.stab-4 { width: 92px; margin-left: 2px; border-left: 1px solid #a9a9a9; border-right: 1px solid #a9a9a9; height: 22px; margin-top: 3px; line-height: 18px; }
.addsheet { margin: 3px 0 0 33px; }
.tb-dots { margin-left: auto; width: 3px; height: 14px; margin-top: 7px; background: repeating-linear-gradient(#9a9a9a 0 2px, transparent 2px 5px); }
.hscroll { width: 724px; margin: 4px 27px 0 17px; height: 18px; display: flex; background: #cfcfcf; }
.hs-btn { width: 19px; background: #fff; border: 1px solid #8a8a8a; display: flex; align-items: center; justify-content: center; flex: none; }
.hs-btn:first-child { width: 17px; }
.hs-l { width: 0; height: 0; border: 5px solid transparent; border-right: 5px solid #555; border-left: 0; }
.hs-r { width: 0; height: 0; border: 5px solid transparent; border-left: 5px solid #555; border-right: 0; }
.hs-thumb { width: 648px; background: #fff; border-top: 1px solid #8a8a8a; border-bottom: 1px solid #8a8a8a; border-right: 1px solid #8a8a8a; }
.hs-track { flex: 1; }

/* Status bar */
.status { height: 27px; flex: none; display: flex; align-items: center; background: #f3f3f3; font-size: 15px; color: #444; }
.st-ready { margin-left: 10px; width: 30px; margin-top: -2px; }
.st-ic { margin-left: 24px; }
.st-acc { margin-left: 3px; margin-top: -2px; }
.st-right { margin-left: auto; display: flex; align-items: center; height: 27px; margin-right: 6px; }
.view { width: 50px; height: 27px; display: flex; align-items: center; justify-content: center; }
.view-on { background: #c6c6c6; }
.zoomer { position: relative; width: 141px; height: 1px; margin-left: 7px; background: linear-gradient(to right, #555 0 4px, transparent 4px 16px, #555 16px 141px); }
.z-thumb { position: absolute; left: 75px; top: -6px; width: 5px; height: 13px; border-radius: 3px; background: #555; }
.z-plus { margin-left: 5px; width: 12px; text-align: center; font-size: 16px; color: #555; }
.z-pct { margin-left: 15px; width: 44px; text-align: left; font-size: 15.5px; white-space: nowrap; margin-top: -2px; }

/* Taskbar */
.taskbar { position: relative; height: 50px; flex: none; display: flex; align-items: center; background: #1f2f38; color: #fff; }
.tb { display: flex; align-items: center; justify-content: center; height: 50px; flex: none; }
.w60 { width: 60px; }
.w62 { width: 62px; }
.first { margin-left: 2px; }
.task { height: 50px; width: 200px; display: flex; align-items: center; font-size: 15px; line-height: 47px; white-space: nowrap; flex: none; color: #eef0f1; }
.t-chrome { width: 190px; margin-left: 7px; padding-left: 9px; gap: 6px; }
.t-excel { margin-left: 6px; background: #535f64; padding-left: 13px; gap: 4px; }
.tx { font: 700 12px "Liberation Sans", sans-serif; fill: #fff; text-anchor: middle; }
.task-line { position: absolute; bottom: 0; height: 3px; background: #76b9ed; }
.l-chrome { left: 559px; width: 190px; }
.l-excel { left: 755px; width: 200px; }
.tray { margin-left: auto; display: flex; align-items: center; height: 50px; padding-right: 20px; }
.t-temp { margin-left: 11px; width: 29px; font-size: 16px; white-space: nowrap; }
.t-wx { margin-left: 11px; width: 18px; font-size: 17px; }
.t-up { margin-left: 21px; }
.t-bat { margin-left: 12px; }
.t-wifi { margin-left: 13px; }
.t-vol { margin-left: 11px; }
.t-kbd { margin-left: 10px; }
.t-ime { margin-left: 10px; width: 18px; font-size: 17px; }
.t-clock { margin-left: 14px; width: 75px; height: 46px; display: flex; flex-direction: column; align-items: center; font-size: 15.5px; line-height: 23px; white-space: nowrap; margin-top: -2px; }
.t-notif { position: relative; margin-left: 23px; width: 32px; height: 34px; padding-top: 6px; }
.t-notif b { position: absolute; right: 0; bottom: -2px; width: 20px; height: 20px; border-radius: 50%; background: #2b3a42; border: 1px solid #8a9296; text-align: center; font: 700 14px/18px "Open Sans", sans-serif; color: #fff; }

/* Annotation overlay */
.redmark { position: absolute; left: 1910px; top: 937px; width: 10px; height: 63px; border: 2px solid #777; border-radius: 5px; padding: 17px 2px 2px; }
.redmark i { height: 100%; background: #ef3b45; }

/* Watermark overlay */
.wm { position: absolute; left: 1477px; top: 880px; width: 345px; color: rgba(255,255,255,.75); text-shadow: 0 0 2px rgba(90,90,90,.35); font-family: "Liberation Sans", sans-serif; pointer-events: none; }
.wm-top { display: flex; align-items: flex-end; height: 104px; }
.wm-bai { font-weight: 700; font-size: 76px; line-height: 76px; margin-right: 4px; margin-bottom: 6px; }
.wm-paw { position: relative; width: 98px; height: 104px; margin-left: -3px; }
.wm-du { position: absolute; left: 23px; top: 46px; font-size: 42px; line-height: 48px; font-weight: 400; color: rgba(255,255,255,.8); }
.wm-cn { font-family: "Noto Sans CJK SC", sans-serif; font-weight: 700; font-size: 57px; line-height: 64px; margin-left: 1px; white-space: nowrap; }
.wm-url { font-size: 42px; line-height: 38px; height: 38px; margin-top: 12px; white-space: nowrap; }
```
